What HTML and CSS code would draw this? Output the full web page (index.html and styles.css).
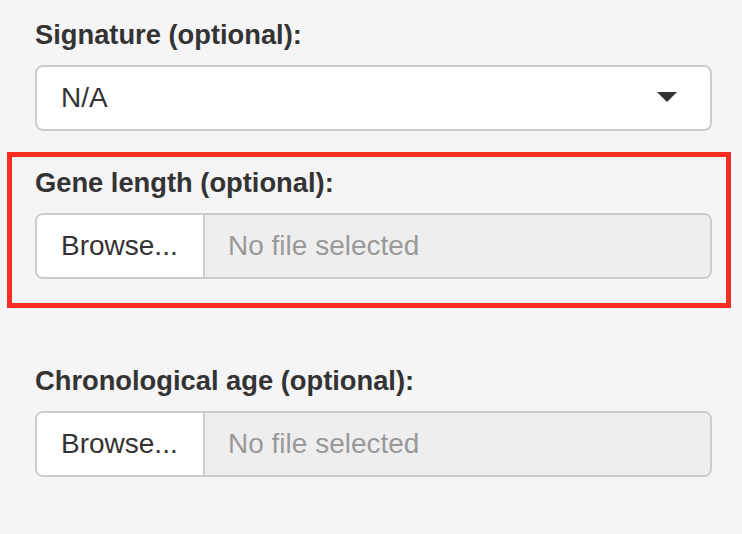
FILE: index.html
```html
<!DOCTYPE html>
<html>
<head>
<meta charset="utf-8">
<link rel="stylesheet" href="styles.css">
</head>
<body>
<div class="page">
  <div class="group">
    <label class="label">Signature (optional):</label>
    <div class="select">
      <span class="select-value">N/A</span>
      <svg class="caret" width="20" height="10" viewBox="0 0 20 10"><polygon points="0,0 20,0 10,10" fill="#333"/></svg>
    </div>
  </div>
  <div class="group highlighted">
    <label class="label">Gene length (optional):</label>
    <div class="file">
      <span class="browse">Browse...</span>
      <span class="filename">No file selected</span>
    </div>
  </div>
  <div class="group spaced">
    <label class="label">Chronological age (optional):</label>
    <div class="file">
      <span class="browse">Browse...</span>
      <span class="filename">No file selected</span>
    </div>
  </div>
</div>
</body>
</html>
```

FILE: styles.css
```css
html, body {
  margin: 0;
  padding: 0;
  background: #f5f5f5;
}
body {
  font-family: "Liberation Sans", Arial, sans-serif;
  color: #333;
}
.page {
  width: 724px;
  padding: 16px 0 0 7px;
  display: flex;
  flex-direction: column;
}
.group {
  display: flex;
  flex-direction: column;
  padding: 0 19px 0 28px;
}
.highlighted {
  margin-top: 21px;
  border: 5px solid #fb2c22;
  padding: 7px 14px 24px 23px;
}
.spaced {
  margin-top: 54px;
}
.label {
  display: block;
  font-size: 27.3px;
  font-weight: bold;
  line-height: 38px;
  margin-bottom: 11px;
}
.select {
  box-sizing: border-box;
  height: 66px;
  background: #fff;
  border: 2px solid #ccc;
  border-radius: 8px;
  display: flex;
  align-items: center;
  justify-content: space-between;
  padding: 0 33px 0 24px;
}
.select-value {
  font-size: 28px;
}
.caret {
  display: block;
  margin-top: -2px;
}
.file {
  box-sizing: border-box;
  height: 66px;
  display: flex;
  border: 2px solid #ccc;
  border-radius: 8px;
  overflow: hidden;
}
.browse {
  box-sizing: border-box;
  width: 168px;
  flex: none;
  background: #fff;
  border-right: 2px solid #ccc;
  display: flex;
  align-items: center;
  padding-left: 24px;
  font-size: 28px;
  color: #333;
}
.filename {
  flex: 1;
  background: #eee;
  display: flex;
  align-items: center;
  padding-left: 23px;
  font-size: 28px;
  color: #999;
}
```
